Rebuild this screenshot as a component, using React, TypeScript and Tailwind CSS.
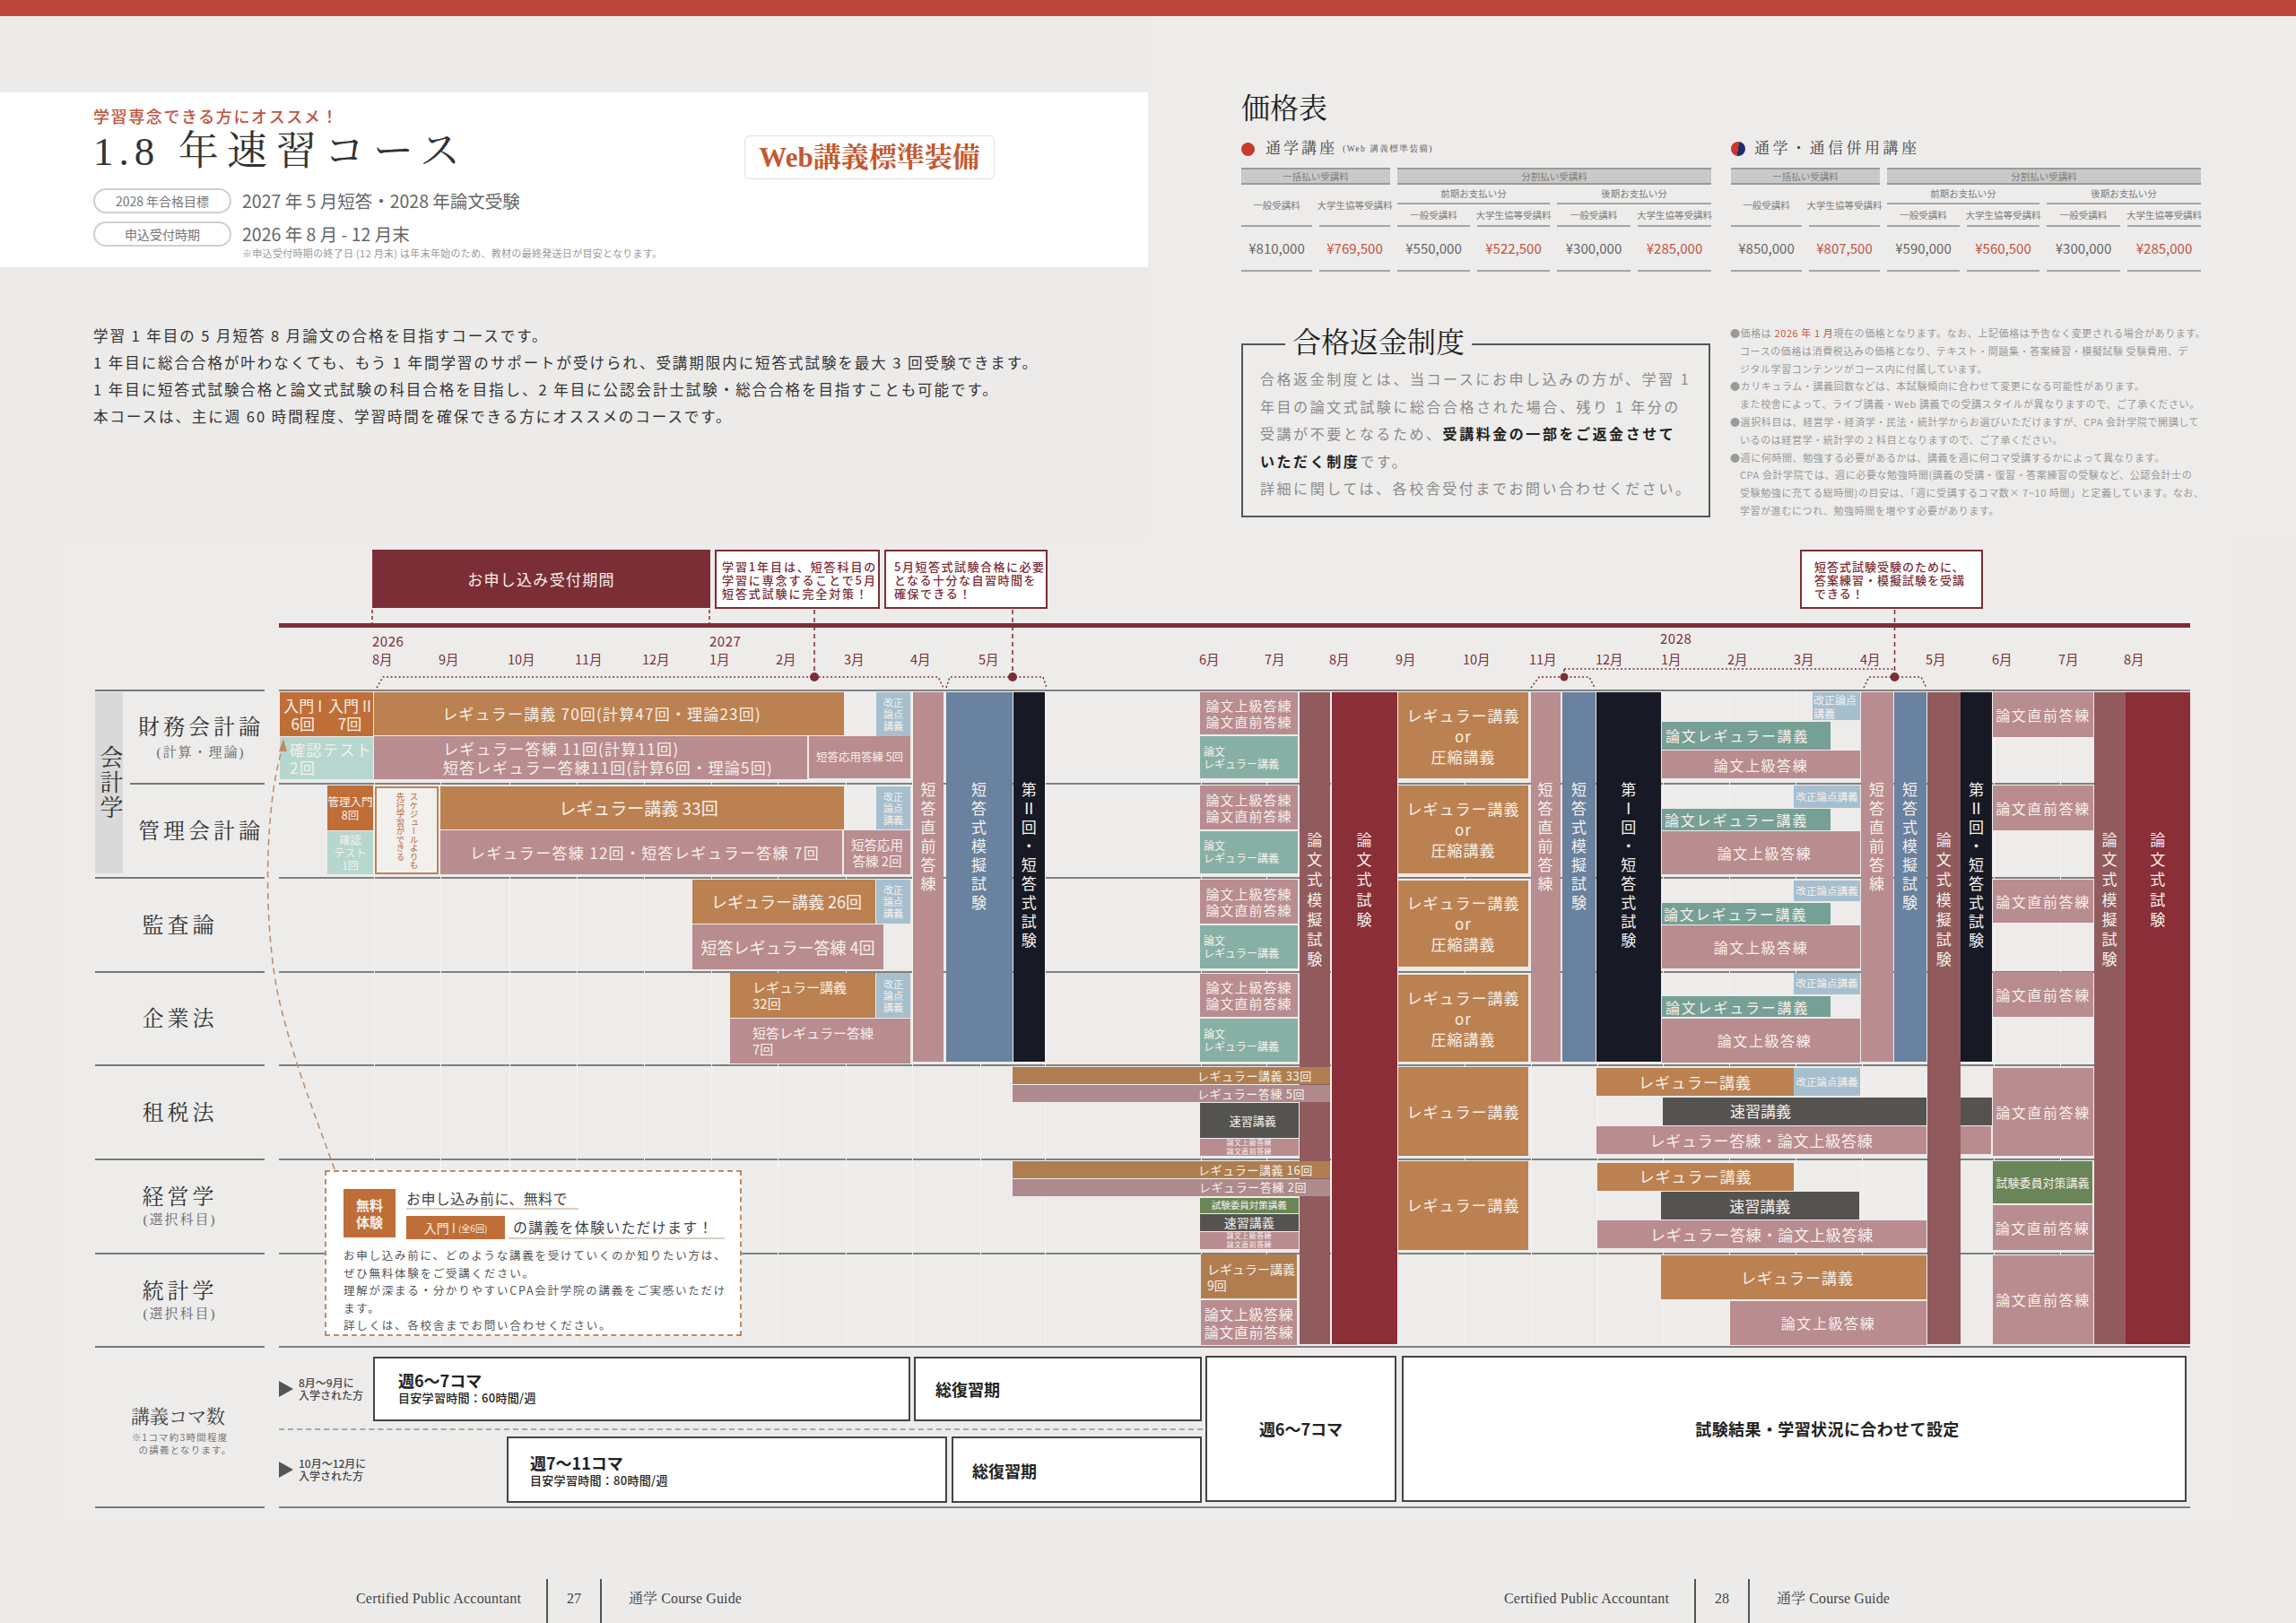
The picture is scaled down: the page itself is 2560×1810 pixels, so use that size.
import { clsx } from "clsx";

const SANS = "font-['Noto_Sans_CJK_JP','Noto_Sans',sans-serif]";
const SERIF = "font-['Liberation_Serif','Noto_Serif_CJK_JP','Noto_Sans_CJK_JP',serif]";

// gantt colours
const ORANGE = "bg-[#BC8150]";
const DEEP = "bg-[#BF6E38]";
const MAUVE = "bg-[#B98C90]";
const TEAL = "bg-[#86B0A6]";
const GREEN = "bg-[#769F96]";
const PALE = "bg-[#B6D7CF]";
const SKY = "bg-[#A6BFCF]";
const BLUE = "bg-[#68829F]";
const NAVY = "bg-[#171925]";
const BROWN = "bg-[#915B5E]";
const WINE = "bg-[#8A2E38]";
const GRAY = "bg-[#555350]";
const MOSS = "bg-[#6A8558]";

type BarData = { x: [number, number]; y: [number, number]; bg: string; lines?: string[]; cls?: string };
type ColData = { x: [number, number]; y1: number; bg: string; text: string; cls: string };

const REV3 = ["改正", "論点", "講義"];
const ESSAY2 = ["論文上級答練", "論文直前答練"];
const ESSAY_REG = ["論文", "レギュラー講義"];
const OR = ["レギュラー講義", "or", "圧縮講義"];

const bars: BarData[] = [
  // 財務会計論
  { x: [312, 363.5], y: [772, 821], bg: DEEP, lines: ["入門 I", "6回"], cls: "text-[17px] leading-[20px]" },
  { x: [364, 416], y: [772, 821], bg: DEEP, lines: ["入門 II", "7回"], cls: "text-[17px] leading-[20px]" },
  { x: [417, 941], y: [772, 820], bg: ORANGE, lines: ["レギュラー講義 70回(計算47回・理論23回)"], cls: "text-[17px] tracking-[1.2px] pr-[16px]" },
  { x: [977, 1015], y: [772, 821], bg: SKY, lines: REV3, cls: "text-[11px] leading-[13px]" },
  { x: [312, 416], y: [822, 869], bg: PALE, lines: ["確認テスト", "2回"], cls: "text-[17px] leading-[20px] tracking-[1.5px] items-start pl-[11px]" },
  { x: [417, 900], y: [821, 869], bg: MAUVE, lines: ["レギュラー答練 11回(計算11回)", "短答レギュラー答練11回(計算6回・理論5回)"], cls: "text-[17px] leading-[21px] tracking-[1.3px] items-start pl-[77px]" },
  { x: [902, 1015], y: [821, 868], bg: MAUVE, lines: ["短答応用答練 5回"], cls: "text-[12.5px]" },
  // 管理会計論
  { x: [365, 416], y: [876, 925.5], bg: DEEP, lines: ["管理入門", "8回"], cls: "text-[12.5px] leading-[15px]" },
  { x: [365, 416], y: [926.5, 975], bg: PALE, lines: ["確認", "テスト", "1回"], cls: "text-[12px] leading-[14px]" },
  { x: [491, 941], y: [877, 925], bg: ORANGE, lines: ["レギュラー講義 33回"], cls: "text-[19px] pr-[8px]" },
  { x: [491, 939], y: [926, 975], bg: MAUVE, lines: ["レギュラー答練 12回・短答レギュラー答練 7回"], cls: "text-[17px] tracking-[1.3px] pl-[8px]" },
  { x: [941, 1015], y: [926, 975], bg: MAUVE, lines: ["短答応用", "答練 2回"], cls: "text-[14.5px] leading-[18px]" },
  { x: [977, 1015], y: [877, 925], bg: SKY, lines: REV3, cls: "text-[11px] leading-[13px]" },
  // 監査論
  { x: [772, 976], y: [980.5, 1030], bg: ORANGE, lines: ["レギュラー講義 26回"], cls: "text-[18px] pl-[6px]" },
  { x: [977, 1015], y: [980.5, 1030], bg: SKY, lines: REV3, cls: "text-[11px] leading-[13px]" },
  { x: [772, 985], y: [1031, 1081], bg: MAUVE, lines: ["短答レギュラー答練 4回"], cls: "text-[18px]" },
  // 企業法
  { x: [814, 976], y: [1085, 1135], bg: ORANGE, lines: ["レギュラー講義", "32回"], cls: "text-[15px] leading-[18px] items-start pl-[25px]" },
  { x: [977, 1015], y: [1085, 1135], bg: SKY, lines: REV3, cls: "text-[11px] leading-[13px]" },
  { x: [814, 1015], y: [1136, 1185.5], bg: MAUVE, lines: ["短答レギュラー答練", "7回"], cls: "text-[15px] leading-[18px] items-start pl-[25px]" },
  // 論文 6-7月
  { x: [1338, 1447], y: [772, 819], bg: MAUVE, lines: ESSAY2, cls: "text-[15px] leading-[18px] tracking-[1px]" },
  { x: [1338, 1447], y: [821, 868], bg: TEAL, lines: ESSAY_REG, cls: "text-[12px] leading-[14px] items-start pl-[4px]" },
  { x: [1338, 1447], y: [876, 925], bg: MAUVE, lines: ESSAY2, cls: "text-[15px] leading-[18px] tracking-[1px]" },
  { x: [1338, 1447], y: [926.5, 974], bg: TEAL, lines: ESSAY_REG, cls: "text-[12px] leading-[14px] items-start pl-[4px]" },
  { x: [1338, 1447], y: [981, 1030], bg: MAUVE, lines: ESSAY2, cls: "text-[15px] leading-[18px] tracking-[1px]" },
  { x: [1338, 1447], y: [1031.5, 1080], bg: TEAL, lines: ESSAY_REG, cls: "text-[12px] leading-[14px] items-start pl-[4px]" },
  { x: [1338, 1447], y: [1086, 1134], bg: MAUVE, lines: ESSAY2, cls: "text-[15px] leading-[18px] tracking-[1px]" },
  { x: [1338, 1447], y: [1136, 1184], bg: TEAL, lines: ESSAY_REG, cls: "text-[12px] leading-[14px] items-start pl-[4px]" },
  // レギュラー or 圧縮
  { x: [1559, 1704], y: [772, 868], bg: ORANGE, lines: OR, cls: "text-[17px] leading-[23px] tracking-[1px]" },
  { x: [1559, 1704], y: [875.5, 974], bg: ORANGE, lines: OR, cls: "text-[17px] leading-[23px] tracking-[1px]" },
  { x: [1559, 1704], y: [981.5, 1078], bg: ORANGE, lines: OR, cls: "text-[17px] leading-[23px] tracking-[1px]" },
  { x: [1559, 1704], y: [1087, 1184], bg: ORANGE, lines: OR, cls: "text-[17px] leading-[23px] tracking-[1px]" },
  // 2028 1-4月 財務
  { x: [2021, 2074], y: [772, 803], bg: SKY, lines: ["改正論点", "講義"], cls: "text-[12px] leading-[15px] items-start pl-[1px]" },
  { x: [1853, 2041], y: [804.5, 836], bg: GREEN, lines: ["論文レギュラー講義"], cls: "text-[16px] tracking-[1.8px] items-start pl-[4px]" },
  { x: [1853, 2074], y: [837, 868], bg: MAUVE, lines: ["論文上級答練"], cls: "text-[16px] tracking-[1.6px]" },
  // 管理
  { x: [2000, 2074], y: [876, 900.5], bg: SKY, lines: ["改正論点講義"], cls: "text-[11.5px]" },
  { x: [1853, 2041], y: [902, 925.5], bg: GREEN, lines: ["論文レギュラー講義"], cls: "text-[16px] tracking-[1.8px] items-start pl-[3px]" },
  { x: [1853, 2074], y: [927, 975], bg: MAUVE, lines: ["論文上級答練"], cls: "text-[16px] tracking-[1.6px] pl-[8px]" },
  // 監査
  { x: [2000, 2074], y: [981.5, 1005], bg: SKY, lines: ["改正論点講義"], cls: "text-[11.5px]" },
  { x: [1853, 2041], y: [1007, 1030.5], bg: GREEN, lines: ["論文レギュラー講義"], cls: "text-[16px] tracking-[1.8px] items-start pl-[2px]" },
  { x: [1853, 2074], y: [1032, 1080], bg: MAUVE, lines: ["論文上級答練"], cls: "text-[16px] tracking-[1.6px]" },
  // 企業
  { x: [2000, 2074], y: [1085, 1109], bg: SKY, lines: ["改正論点講義"], cls: "text-[11.5px]" },
  { x: [1853, 2041], y: [1111, 1134], bg: GREEN, lines: ["論文レギュラー講義"], cls: "text-[16px] tracking-[1.8px] items-start pl-[4px]" },
  { x: [1853, 2074], y: [1136, 1184.5], bg: MAUVE, lines: ["論文上級答練"], cls: "text-[16px] tracking-[1.6px] pl-[8px]" },
  // 論文直前 右
  { x: [2222, 2334], y: [772, 822], bg: MAUVE, lines: ["論文直前答練"], cls: "text-[16px] tracking-[1.6px]" },
  { x: [2222, 2334], y: [876, 925.5], bg: MAUVE, lines: ["論文直前答練"], cls: "text-[16px] tracking-[1.6px]" },
  { x: [2222, 2334], y: [980.5, 1029], bg: MAUVE, lines: ["論文直前答練"], cls: "text-[16px] tracking-[1.6px]" },
  { x: [2222, 2334], y: [1084, 1134], bg: MAUVE, lines: ["論文直前答練"], cls: "text-[16px] tracking-[1.6px]" },
  // 租税法
  { x: [1129, 1483], y: [1190, 1208.5], bg: "bg-[#AE7E50]", lines: ["レギュラー講義 33回"], cls: "text-[13px] tracking-[0.6px] pl-[186px]" },
  { x: [1129, 1483], y: [1210, 1228.5], bg: "bg-[#AF8A8C]", lines: ["レギュラー答練 5回"], cls: "text-[13px] tracking-[0.6px] pl-[178px]" },
  { x: [1338, 1447.5], y: [1230, 1268.5], bg: GRAY, lines: ["速習講義"], cls: "text-[13px] pl-[8px]" },
  { x: [1338, 1447.5], y: [1269.5, 1288.5], bg: MAUVE, lines: ESSAY2, cls: "text-[8px] leading-[10px] tracking-[0.4px]" },
  { x: [1559, 1704], y: [1190, 1289], bg: ORANGE, lines: ["レギュラー講義"], cls: "text-[17px] tracking-[1px]" },
  { x: [1780, 2000], y: [1191, 1222], bg: ORANGE, lines: ["レギュラー講義"], cls: "text-[17px] tracking-[1px]" },
  { x: [2000, 2074], y: [1191, 1222], bg: SKY, lines: ["改正論点講義"], cls: "text-[11.5px]" },
  { x: [1854, 2148], y: [1223.5, 1254.5], bg: GRAY, lines: ["速習講義"], cls: "text-[17px] pr-[76px]" },
  { x: [2186, 2221], y: [1223.5, 1254.5], bg: GRAY },
  { x: [1780, 2148], y: [1256, 1287], bg: MAUVE, lines: ["レギュラー答練・論文上級答練"], cls: "text-[17px] tracking-[0.8px]" },
  { x: [2186, 2220], y: [1256, 1287], bg: MAUVE },
  { x: [2222, 2334], y: [1191, 1288.5], bg: MAUVE, lines: ["論文直前答練"], cls: "text-[16px] tracking-[1.6px]" },
  // 経営学
  { x: [1129, 1483], y: [1295, 1313.5], bg: "bg-[#AE7E50]", lines: ["レギュラー講義 16回"], cls: "text-[13px] tracking-[0.6px] pl-[188px]" },
  { x: [1129, 1483], y: [1314.5, 1333.5], bg: "bg-[#AF8A8C]", lines: ["レギュラー答練 2回"], cls: "text-[13px] tracking-[0.6px] pl-[182px]" },
  { x: [1338, 1447.5], y: [1335.5, 1353], bg: MOSS, lines: ["試験委員対策講義"], cls: "text-[10.5px]" },
  { x: [1338, 1447.5], y: [1354, 1372.5], bg: GRAY, lines: ["速習講義"], cls: "text-[14px]" },
  { x: [1338, 1447.5], y: [1373.5, 1393], bg: MAUVE, lines: ESSAY2, cls: "text-[8px] leading-[10px] tracking-[0.4px]" },
  { x: [1559, 1704], y: [1294.5, 1393.5], bg: ORANGE, lines: ["レギュラー講義"], cls: "text-[17px] tracking-[1px]" },
  { x: [1781, 2000], y: [1296.5, 1327.5], bg: ORANGE, lines: ["レギュラー講義"], cls: "text-[17px] tracking-[1px]" },
  { x: [1852, 2072.5], y: [1329, 1360], bg: GRAY, lines: ["速習講義"], cls: "text-[17px]" },
  { x: [1781, 2148], y: [1361, 1392], bg: MAUVE, lines: ["レギュラー答練・論文上級答練"], cls: "text-[17px] tracking-[0.8px]" },
  { x: [2222, 2333], y: [1295, 1342], bg: MOSS, lines: ["試験委員対策講義"], cls: "text-[13px]" },
  { x: [2222, 2333], y: [1343.5, 1393.5], bg: MAUVE, lines: ["論文直前答練"], cls: "text-[16px] tracking-[1.6px]" },
  // 統計学
  { x: [1339, 1446], y: [1399, 1448], bg: "bg-[#B27D4E]", lines: ["レギュラー講義", "9回"], cls: "text-[14px] leading-[18px] items-start pl-[7px]" },
  { x: [1339, 1446], y: [1449.5, 1499.5], bg: MAUVE, lines: ESSAY2, cls: "text-[16px] leading-[20px] tracking-[0.6px]" },
  { x: [1852, 2148], y: [1400, 1449], bg: ORANGE, lines: ["レギュラー講義"], cls: "text-[17px] tracking-[1px] pl-[8px]" },
  { x: [1929, 2148], y: [1451, 1499.5], bg: MAUVE, lines: ["論文上級答練"], cls: "text-[16px] tracking-[1.6px]" },
  { x: [2222, 2334], y: [1400, 1498.5], bg: MAUVE, lines: ["論文直前答練"], cls: "text-[16px] tracking-[1.6px]" },
];

const SHORT = "text-[17px] tracking-[4px] pt-[100px]";
const ESSAY = "text-[17px] tracking-[5.2px] pt-[156px]";

const cols: ColData[] = [
  { x: [1018, 1052], y1: 1184, bg: MAUVE, text: "短答直前答練", cls: SHORT },
  { x: [1054.5, 1128.5], y1: 1184, bg: BLUE, text: "短答式模擬試験", cls: SHORT },
  { x: [1129.5, 1165], y1: 1184, bg: NAVY, text: "第Ⅱ回・短答式試験", cls: SHORT },
  { x: [1448.5, 1483], y1: 1498.5, bg: BROWN, text: "論文式模擬試験", cls: ESSAY },
  { x: [1484.5, 1557.5], y1: 1498.5, bg: WINE, text: "論文式試験", cls: ESSAY },
  { x: [1706.5, 1739.5], y1: 1184, bg: MAUVE, text: "短答直前答練", cls: SHORT },
  { x: [1742, 1779], y1: 1184, bg: BLUE, text: "短答式模擬試験", cls: SHORT },
  { x: [1780, 1851.5], y1: 1184, bg: NAVY, text: "第Ⅰ回・短答式試験", cls: SHORT },
  { x: [2074.5, 2110.5], y1: 1184, bg: MAUVE, text: "短答直前答練", cls: SHORT },
  { x: [2111.5, 2147.5], y1: 1184, bg: BLUE, text: "短答式模擬試験", cls: SHORT },
  { x: [2149, 2185.5], y1: 1498.5, bg: BROWN, text: "論文式模擬試験", cls: ESSAY },
  { x: [2186, 2221], y1: 1184, bg: NAVY, text: "第Ⅱ回・短答式試験", cls: SHORT },
  { x: [2334.5, 2369.5], y1: 1498.5, bg: BROWN, text: "論文式模擬試験", cls: ESSAY },
  { x: [2370, 2441.5], y1: 1498.5, bg: WINE, text: "論文式試験", cls: ESSAY },
];

const months: [string, number][] = [
  ["8月", 415], ["9月", 489], ["10月", 566], ["11月", 641], ["12月", 716], ["1月", 791], ["2月", 865], ["3月", 941], ["4月", 1015],
  ["5月", 1091], ["6月", 1337], ["7月", 1410], ["8月", 1482], ["9月", 1556], ["10月", 1631], ["11月", 1705], ["12月", 1779],
  ["1月", 1852], ["2月", 1926], ["3月", 2000], ["4月", 2074], ["5月", 2147], ["6月", 2221], ["7月", 2295], ["8月", 2368],
];

const ORIGIN_X = 311;
const ORIGIN_Y = 769;

const Bar = ({ x, y, bg, lines, cls }: BarData) => (
  <div
    className={clsx("absolute flex flex-col items-center justify-center overflow-hidden whitespace-nowrap text-[#F6F0EA]", bg, cls)}
    style={{ left: x[0] - ORIGIN_X, top: y[0] - ORIGIN_Y, width: x[1] - x[0], height: y[1] - y[0] }}
  >
    {lines?.map((l, i) => <span key={i}>{l}</span>)}
  </div>
);

const Col = ({ x, y1, bg, text, cls }: ColData) => (
  <div
    className={clsx("absolute flex justify-center overflow-hidden text-[#F6F0EA] leading-none", bg, cls)}
    style={{ left: x[0] - ORIGIN_X, top: 772 - ORIGIN_Y, width: x[1] - x[0], height: y1 - 772 }}
  >
    <span className="[writing-mode:vertical-rl] [text-orientation:upright] whitespace-nowrap">{text}</span>
  </div>
);

const PriceTable = ({ prices }: { prices: string[] }) => {
  const sub = ["一般受講料", "大学生協等受講料", "一般受講料", "大学生協等受講料"];
  return (
    <div className="grid grid-cols-[79px_79px_81px_81px_82px_82px] grid-rows-[19px_22px_25px_50px] gap-x-2 text-[10.5px] text-[#7C7C7C]">
      <div className="col-span-2 flex items-center justify-center border-y-2 border-[#9A9A9A] bg-[#C9C9C9]">一括払い受講料</div>
      <div className="col-span-4 flex items-center justify-center border-y-2 border-[#9A9A9A] bg-[#C9C9C9]">分割払い受講料</div>
      <div className="row-span-2 flex items-center justify-center border-b-2 border-[#A5A5A5]">一般受講料</div>
      <div className="row-span-2 flex items-center justify-center border-b-2 border-[#A5A5A5] whitespace-nowrap">大学生協等受講料</div>
      <div className="col-span-2 flex items-center justify-center border-b-2 border-[#A5A5A5]">前期お支払い分</div>
      <div className="col-span-2 flex items-center justify-center border-b-2 border-[#A5A5A5]">後期お支払い分</div>
      {sub.map((s, i) => (
        <div key={i} className="flex items-center justify-center border-b-2 border-[#A5A5A5] whitespace-nowrap">{s}</div>
      ))}
      {prices.map((p, i) => (
        <div key={i} className={clsx("flex items-center justify-center border-b-2 border-[#A5A5A5] text-[15px]", i % 2 ? "text-[#C1543F]" : "text-[#666]")}>
          {p}
        </div>
      ))}
    </div>
  );
};

const SubjectLabel = ({ name, sub, cls, subCls }: { name: string; sub?: string; cls?: string; subCls?: string }) => (
  <div className={clsx("flex flex-col items-center justify-center text-[#333]", SERIF, cls)}>
    <span className="text-[24px] leading-[30px] tracking-[4px]">{name}</span>
    {sub && <span className={clsx("text-[15px] leading-[20px] tracking-[2px] text-[#666]", subCls)}>{sub}</span>}
  </div>
);

const Callout = ({ cls, children }: { cls: string; children: React.ReactNode }) => (
  <div className={clsx("flex h-[66px] items-center border-2 border-[#7B2E36] bg-white text-[13px] font-medium leading-[15px] text-[#7B2E36] whitespace-nowrap", cls)}>
    <p>{children}</p>
  </div>
);

const Triangle = () => <div className="h-0 w-0 border-y-[9px] border-l-[16px] border-y-transparent border-l-[#555]" />;

const Footer = ({ page, cls }: { page: number; cls: string }) => (
  <div className={clsx("flex h-[49px] items-start text-[16px] text-[#444]", cls)}>
    <span className={clsx("w-[212px] pt-[11px] leading-[22px] tracking-[0.2px]", SERIF)}>Certified Public Accountant</span>
    <span className={clsx("h-full w-[62px] border-x-2 border-[#555] pt-[11px] text-center leading-[22px]", SERIF)}>{page}</span>
    <span className={clsx("pl-[30px] pt-[11px] leading-[22px] tracking-[0.1px]", SERIF)}>通学 Course Guide</span>
  </div>
);

export default function App() {
  return (
    <div className={clsx("h-[1810px] w-[2560px] overflow-hidden bg-[#ECEBEA]", SANS)}>
      <div className="h-[18px] bg-[#BC4639]" />

      <div className="flex h-[582px]">
        {/* left page head */}
        <div className="w-[1280px] pt-[85px]">
          <div className="flex h-[195px] bg-white">
            <div className="w-[830px] pl-[104px] pt-[16px]">
              <p className="text-[18px] font-medium leading-[20px] tracking-[1.6px] text-[#C1543F]">学習専念できる方にオススメ！</p>
              <h1 className={clsx("mt-[5px] whitespace-nowrap text-[45px] leading-[50px] tracking-[9.3px] text-[#333]", SERIF)}><span className="tracking-[6px]">1.8</span> 年速習コース</h1>
              <div className="mt-[16px] flex items-center">
                <span className="flex h-[28px] w-[154px] items-center justify-center rounded-full border-2 border-[#CFCFCF] text-[14px] text-[#777]">2028 年合格目標</span>
                <span className="ml-[12px] text-[19.5px] leading-[28px] text-[#666]">2027 年 5 月短答・2028 年論文受験</span>
              </div>
              <div className="mt-[9px] flex items-center">
                <span className="flex h-[28px] w-[154px] items-center justify-center rounded-full border-2 border-[#CFCFCF] text-[14px] text-[#777]">申込受付時期</span>
                <span className="ml-[12px] text-[19.5px] leading-[28px] text-[#666]">2026 年 8 月 - 12 月末</span>
              </div>
              <p className="pl-[166px] text-[11px] leading-[14px] tracking-[0.3px] text-[#999]">※申込受付時期の終了日 (12 月末) は年末年始のため、教材の最終発送日が目安となります。</p>
            </div>
            <div className="mt-[48px] h-[49px]">
              <span className={clsx("flex h-full w-[279px] items-center justify-center rounded-md border border-[#EADDD5] pt-[2px] text-[31px] font-bold text-[#C4582F]", SERIF)}>Web講義標準装備</span>
            </div>
          </div>
          <div className="mt-[61px] pl-[104px] text-[16.5px] leading-[30px] tracking-[1.95px] text-[#333]">
            <p>学習 1 年目の 5 月短答 8 月論文の合格を目指すコースです。</p>
            <p>1 年目に総合合格が叶わなくても、もう 1 年間学習のサポートが受けられ、受講期限内に短答式試験を最大 3 回受験できます。</p>
            <p>1 年目に短答式試験合格と論文式試験の科目合格を目指し、2 年目に公認会計士試験・総合合格を目指すことも可能です。</p>
            <p>本コースは、主に週 60 時間程度、学習時間を確保できる方にオススメのコースです。</p>
          </div>
        </div>

        {/* price side */}
        <div className="w-[1280px] bg-[#EDECEB] pl-[104px] pt-[85px]">
          <h2 className={clsx("text-[32px] leading-[36px] text-[#222]", SERIF)}>価格表</h2>
          <div className="mt-[14px] flex gap-[22px]">
            <div className="w-[524px]">
              <div className="flex h-[26px] items-center">
                <span className="h-[15px] w-[15px] rounded-full bg-[#C73A2C]" />
                <span className={clsx("ml-[12px] text-[17px] tracking-[3px] text-[#444]", SERIF)}>通学講座</span>
                <span className={clsx("ml-[6px] text-[9.5px] tracking-[1.5px] text-[#555]", SERIF)}>(Web 講義標準装備)</span>
              </div>
              <div className="mt-[8px]">
                <PriceTable prices={["¥810,000", "¥769,500", "¥550,000", "¥522,500", "¥300,000", "¥285,000"]} />
              </div>
            </div>
            <div className="w-[524px]">
              <div className="flex h-[26px] items-center">
                <span className="h-[16px] w-[16px] rounded-full bg-[linear-gradient(100deg,#C73A2C_50%,#1F2D6B_50%)]" />
                <span className={clsx("ml-[10px] text-[17px] tracking-[3.5px] text-[#444]", SERIF)}>通学・通信併用講座</span>
              </div>
              <div className="mt-[8px]">
                <PriceTable prices={["¥850,000", "¥807,500", "¥590,000", "¥560,500", "¥300,000", "¥285,000"]} />
              </div>
            </div>
          </div>

          <div className="mt-[59px] flex gap-[22px]">
            <div className="relative mt-[21px] h-[194px] w-[523px] border-2 border-[#555] px-[19px] pt-[22px] text-[16px] leading-[30.5px] tracking-[2.55px] text-[#8A8A8A]">
              <h3 className={clsx("absolute -top-[22px] left-[47px] bg-[#EDECEB] px-[8px] text-[32px] leading-[38px] tracking-normal text-[#222] whitespace-nowrap", SERIF)}>合格返金制度</h3>
              <p className="whitespace-nowrap">合格返金制度とは、当コースにお申し込みの方が、学習 1</p>
              <p className="whitespace-nowrap">年目の論文式試験に総合合格された場合、残り 1 年分の</p>
              <p className="whitespace-nowrap">受講が不要となるため、<b className="font-bold text-[#222]">受講料金の一部をご返金させて</b></p>
              <p className="whitespace-nowrap"><b className="font-bold text-[#222]">いただく制度</b>です。</p>
              <p className="whitespace-nowrap">詳細に関しては、各校舎受付までお問い合わせください。</p>
            </div>
            <div className="whitespace-nowrap text-[11px] leading-[19.8px] tracking-[0.6px] text-[#999]">
              <p>●価格は <span className="text-[#C1543F]">2026 年 1 月</span>現在の価格となります。なお、上記価格は予告なく変更される場合があります。</p>
              <p className="pl-[11px]">コースの価格は消費税込みの価格となり、テキスト・問題集・答案練習・模擬試験 受験費用、デ</p>
              <p className="pl-[11px]">ジタル学習コンテンツがコース内に付属しています。</p>
              <p>●カリキュラム・講義回数などは、本試験傾向に合わせて変更になる可能性があります。</p>
              <p className="pl-[11px]">また校舎によって、ライブ講義・Web 講義での受講スタイルが異なりますので、ご了承ください。</p>
              <p>●選択科目は、経営学・経済学・民法・統計学からお選びいただけますが、CPA 会計学院で開講して</p>
              <p className="pl-[11px]">いるのは経営学・統計学の 2 科目となりますので、ご了承ください。</p>
              <p>●週に何時間、勉強する必要があるかは、講義を週に何コマ受講するかによって異なります。</p>
              <p className="pl-[11px]">CPA 会計学院では、週に必要な勉強時間(講義の受講・復習・答案練習の受験など、公認会計士の</p>
              <p className="pl-[11px]">受験勉強に充てる総時間)の目安は、「週に受講するコマ数× 7~10 時間」と定義しています。なお、</p>
              <p className="pl-[11px]">学習が進むにつれ、勉強時間を増やす必要があります。</p>
            </div>
          </div>
        </div>
      </div>

      {/* schedule panel */}
      <div className="relative ml-[73px] h-[1097px] w-[2419px] bg-[#EDECEB]">
        {/* header */}
        <div className="ml-[238px] h-[169px] w-[2131px]">
          <div className="flex pt-[13px]">
            <div className="ml-[104px] flex h-[65px] w-[377px] items-center justify-center bg-[#7B2E36] text-[17px] tracking-[1.3px] text-[#F6F0EA]">お申し込み受付期間</div>
            <Callout cls="ml-[5px] w-[184px] pl-[6px] tracking-[1.9px]">
              学習1年目は、短答科目の<br />学習に専念することで5月<br />短答式試験に完全対策！
            </Callout>
            <Callout cls="ml-[5px] w-[182px] pl-[9px] tracking-[1.5px]">
              5月短答式試験合格に必要<br />となる十分な自習時間を<br />確保できる！
            </Callout>
            <Callout cls="ml-[839px] w-[204px] pl-[14px] tracking-[1px]">
              短答式試験受験のために、<br />答案練習・模擬試験を受講<br />できる！
            </Callout>
          </div>
          <div className="mt-[16px] h-[5px] bg-[#7B2E36]" />
          <div className="relative h-[30px] text-[14.5px] text-[#7B2E36]">
            <span className="absolute left-[104px] top-[4px] text-[15px] tracking-[0.5px]">2026</span>
            <span className="absolute left-[480px] top-[4px] text-[15px] tracking-[0.5px]">2027</span>
            <span className="absolute left-[1540px] top-[1px] text-[15px] tracking-[0.5px]">2028</span>
            {months.map(([m, x], i) => (
              <span key={i} className="absolute top-[24px] whitespace-nowrap" style={{ left: x - ORIGIN_X }}>{m}</span>
            ))}
          </div>
        </div>

        {/* rows */}
        <div className="flex pl-[33px]">
          <div className="w-[189px]">
            <div className="flex h-[209px] border-t-2 border-[#777]">
              <div className={clsx("mt-[1px] flex h-[202px] w-[31px] items-center justify-center bg-[#D9D9D9] text-[26px] text-[#333]", SERIF)}>
                <span className="[writing-mode:vertical-rl] [text-orientation:upright] tracking-[2px]">会計学</span>
              </div>
              <div className="ml-[8px] flex-1">
                <SubjectLabel name="財務会計論" sub="(計算・理論)" subCls="mt-[3px]" cls="h-[102px] pl-[8px]" />
                <SubjectLabel name="管理会計論" cls="h-[105px] border-t-2 border-[#777] pl-[8px]" />
              </div>
            </div>
            <SubjectLabel name="監査論" cls="h-[105px] border-t-2 border-[#777]" />
            <SubjectLabel name="企業法" cls="h-[104px] border-t-2 border-[#777]" />
            <SubjectLabel name="租税法" cls="h-[105px] border-t-2 border-[#777]" />
            <SubjectLabel name="経営学" sub="(選択科目)" cls="h-[105px] border-t-2 border-[#777] pb-[2px]" />
            <SubjectLabel name="統計学" sub="(選択科目)" cls="h-[104px] border-t-2 border-[#777] pb-[1px]" />
            <div className="flex h-[181px] flex-col items-center justify-center border-y-2 border-[#777] pt-[8px] text-[#444]">
              <span className={clsx("pr-[4px] text-[21px] leading-[26px]", SERIF)}>講義コマ数</span>
              <span className="mt-[3px] text-[10.5px] leading-[14px] tracking-[1.2px] text-[#777]">※1コマ約3時間程度</span>
              <span className="pl-[12px] text-[10.5px] leading-[14px] tracking-[1.2px] text-[#777]">の講義となります。</span>
            </div>
          </div>

          <div className="relative ml-[16px] w-[2131px]">
            <div className="h-[104px] border-t-2 border-[#808080]" />
            <div className="h-[105px] border-t-2 border-[#808080]" />
            <div className="h-[105px] border-t-2 border-[#808080]" />
            <div className="h-[104px] border-t-2 border-[#808080]" />
            <div className="h-[105px] border-t-2 border-[#808080]" />
            <div className="h-[105px] border-t-2 border-[#808080]" />
            <div className="h-[104px] border-t-2 border-[#808080]" />

            {[...months.map((m) => m[1] + 2), 1165].map((x, i) => (
              <div key={i} className="absolute top-[2px] h-[730px] w-px bg-[#F4F3F2]" style={{ left: x - ORIGIN_X }} />
            ))}
            {cols.map((c, i) => <Col key={i} {...c} />)}
            {bars.map((b, i) => <Bar key={i} {...b} />)}

            {/* スケジュールより先行 */}
            <div className="absolute left-[107px] top-[108px] flex h-[98px] w-[71px] justify-center border-2 border-[#C0825A] bg-[#F2F0EC] pt-[5px] text-[9.5px] leading-[15px] text-[#B5673A]">
              <span className="[writing-mode:vertical-rl] [text-orientation:upright] whitespace-nowrap">スケジュールよりも<br />先行学習ができる</span>
            </div>

            {/* 無料体験 */}
            <div className="absolute left-[51px] top-[536px] h-[185px] w-[465px] border-2 border-dashed border-[#C08A60] bg-white pl-[19px] pt-[19px] text-[#444]">
              <div className="flex">
                <div className="flex h-[54px] w-[58px] items-center justify-center bg-[#BF6E38] text-center text-[15px] font-bold leading-[19px] text-[#F6F0EA]">無料<br />体験</div>
                <div className="ml-[12px]">
                  <p className="w-[192px] border-b-2 border-[#DCCFC2] text-[16px] leading-[21px] tracking-[0.4px]">お申し込み前に、無料で</p>
                  <div className="mt-[7px] flex">
                    <span className="flex h-[26px] w-[110px] items-center justify-center bg-[#BF6E38] text-[14px] text-[#F6F0EA]">入門 I<span className="ml-[3px] text-[10px]">(全6回)</span></span>
                    <span className="ml-[4px] w-[241px] whitespace-nowrap border-b-2 border-[#DCCFC2] pl-[5px] text-[16px] leading-[24px] tracking-[1.2px]">の講義を体験いただけます！</span>
                  </div>
                </div>
              </div>
              <div className="mt-[8px] whitespace-nowrap text-[12.5px] leading-[19.5px] tracking-[1.75px] text-[#555]">
                <p>お申し込み前に、どのような講義を受けていくのか知りたい方は、</p>
                <p>ぜひ無料体験をご受講ください。</p>
                <p>理解が深まる・分かりやすいCPA会計学院の講義をご実感いただけ</p>
                <p>ます。</p>
                <p>詳しくは、各校舎までお問い合わせください。</p>
              </div>
            </div>

            {/* 講義コマ数 */}
            <div className="flex h-[181px] border-y-2 border-[#808080] pt-[10px]">
              <div className="w-[1031px]">
                <div className="flex h-[72px]">
                  <div className="flex w-[105px] items-center">
                    <Triangle />
                    <p className="ml-[6px] text-[12px] font-medium leading-[14px] text-[#444] whitespace-nowrap">8月〜9月に<br />入学された方</p>
                  </div>
                  <div className="flex h-full w-[599px] flex-col justify-center border-2 border-[#444] bg-white pb-[4px] pl-[26px] text-[#222]">
                    <p className="text-[18px] font-bold leading-[24px]">週6〜7コマ</p>
                    <p className="text-[13px] font-medium leading-[16px] tracking-[0.3px]">目安学習時間：60時間/週</p>
                  </div>
                  <div className="ml-[4px] flex h-full w-[321px] items-center border-2 border-[#444] bg-white pl-[22px] text-[18px] font-bold text-[#222]">総復習期</div>
                </div>
                <div className="mt-[8px] h-0 w-[1030px] border-t-2 border-dashed border-[#A8A8A8]" />
                <div className="mt-[7px] flex h-[74px]">
                  <div className="flex w-[254px] items-center">
                    <Triangle />
                    <p className="ml-[6px] text-[12px] font-medium leading-[14px] text-[#444] whitespace-nowrap">10月〜12月に<br />入学された方</p>
                  </div>
                  <div className="flex h-full w-[491px] flex-col justify-center border-2 border-[#444] bg-white pb-[1px] pl-[24px] text-[#222]">
                    <p className="text-[18px] font-bold leading-[24px]">週7〜11コマ</p>
                    <p className="text-[13px] font-medium leading-[16px] tracking-[0.3px]">目安学習時間：80時間/週</p>
                  </div>
                  <div className="ml-[5px] flex h-full w-[279px] items-center border-2 border-[#444] bg-white pl-[21px] pt-[2px] text-[18px] font-bold text-[#222]">総復習期</div>
                </div>
              </div>
              <div className="-mt-[1px] ml-[2px] flex h-[163px] w-[213px] items-center justify-center border-2 border-[#444] bg-white text-[18px] font-bold text-[#222]">週6〜7コマ</div>
              <div className="-mt-[1px] ml-[6px] flex h-[163px] w-[875px] items-center justify-center border-2 border-[#444] bg-white pl-[74px] text-[18px] font-bold tracking-[0.4px] text-[#222]">試験結果・学習状況に合わせて設定</div>
            </div>
          </div>
        </div>

        {/* leaders and the arrow to the trial box */}
        <svg className="pointer-events-none absolute left-0 top-0 h-[1097px] w-[2419px]" viewBox="73 600 2419 1097" fill="none">
          <g stroke="#7B2E36" strokeWidth="1.5">
            <path d="M415 680V695M791 680V695" strokeDasharray="4 3" />
            <path d="M908 680V755M1129 680V755M2112.5 680V755" strokeDasharray="5 4" />
            <path d="M1744 746V755" strokeDasharray="3 3" />
            <g strokeDasharray="2 2.5">
              <path d="M420 767L427 755H1046L1052 767" />
              <path d="M1055 767L1059 755H1163L1167 767" />
              <path d="M1707 767L1716 755H1772L1778 767" />
              <path d="M2078 767L2084 755H2142L2148 767" />
              <path d="M1744 746H2112" />
            </g>
          </g>
          <g fill="#7B2E36">
            <circle cx="908" cy="755" r="5" />
            <circle cx="1129" cy="755" r="5" />
            <circle cx="1744" cy="755" r="4.5" />
            <circle cx="2112.5" cy="755" r="5" />
          </g>
          <path d="M373 1304C350 1240 326 1180 310 1110C298 1050 294 960 305 880C308 860 311 848 314 836" stroke="#C08A60" strokeWidth="1.5" strokeDasharray="7 5" />
          <path d="M316 824L311 838H320Z" fill="#C08A60" />
        </svg>
      </div>

      <div className="grid grid-cols-2 pt-[64px]">
        <Footer page={27} cls="pl-[397px]" />
        <Footer page={28} cls="pl-[397px]" />
      </div>
    </div>
  );
}
